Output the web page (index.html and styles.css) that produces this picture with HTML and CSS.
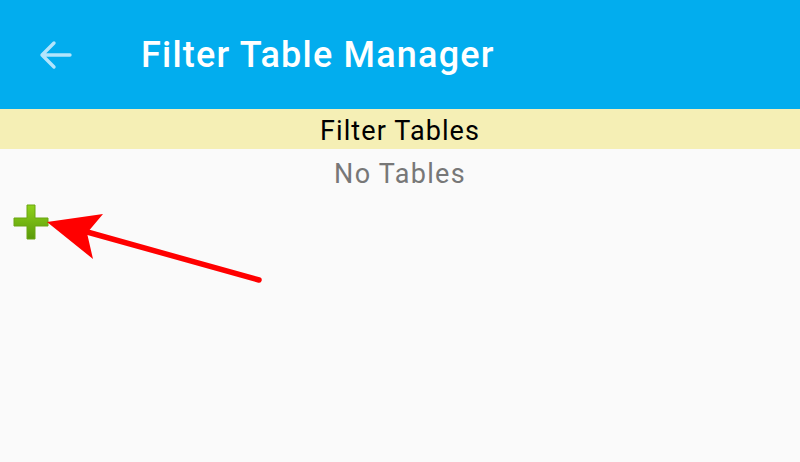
FILE: index.html
```html
<!DOCTYPE html>
<html lang="en">
<head>
<meta charset="UTF-8">
<title>Filter Table Manager</title>
<link rel="stylesheet" href="styles.css">
</head>
<body>

<div class="toolbar">
    <svg class="back" width="34" height="30" viewBox="0 0 34 30">
        <path d="M32 15 H4 M16 3 L4 15 L16 27" fill="none" stroke="#b3e5fc" stroke-width="3.4" stroke-linecap="round" stroke-linejoin="round"/>
    </svg>
    <span class="title">Filter Table Manager</span>
</div>

<div class="section-head">Filter Tables</div>
<div class="empty">No Tables</div>

<div class="add-row">
    <svg class="add" width="36" height="36" viewBox="0 0 36 36">
        <defs>
            <linearGradient id="plusGrad" x1="0" y1="0" x2="0" y2="1">
                <stop offset="0" stop-color="#8fd21a"/>
                <stop offset="1" stop-color="#5a9a0a"/>
            </linearGradient>
        </defs>
        <path d="M14 1 H22 V14 H35 V22 H22 V35 H14 V22 H1 V14 H14 Z" fill="url(#plusGrad)" stroke="#6aa512" stroke-width="1"/>
    </svg>
</div>

<svg class="pointer" width="800" height="462" viewBox="0 0 800 462">
    <line x1="259" y1="280" x2="80" y2="230" stroke="#ff0000" stroke-width="5.5" stroke-linecap="round"/>
    <polygon points="47,222 103,214 87,233 93,259" fill="#ff0000"/>
</svg>

</body>
</html>
```

FILE: styles.css
```css
body { margin: 0; background: #fafafa; font-family: Roboto, "Noto Sans", sans-serif; position: relative; height: 462px; overflow: hidden; }
.toolbar { height: 109px; background: #02adee; display: flex; align-items: center; padding-left: 38px; }
.back { margin-right: 69px; }
.title { color: #fff; font-size: 36px; font-weight: 500; letter-spacing: 1.2px; }
.section-head { height: 39px; padding-top: 1px; background: #f5efb5; color: #000; font-size: 27px; letter-spacing: 1.1px; text-align: center; line-height: 42px; }
.empty { padding-top: 1px; color: #777; font-size: 27px; letter-spacing: 1.3px; text-align: center; line-height: 48px; }
.add-row { padding: 6px 0 0 13px; }
.add { display: block; }
.pointer { position: absolute; left: 0; top: 0; }
```
